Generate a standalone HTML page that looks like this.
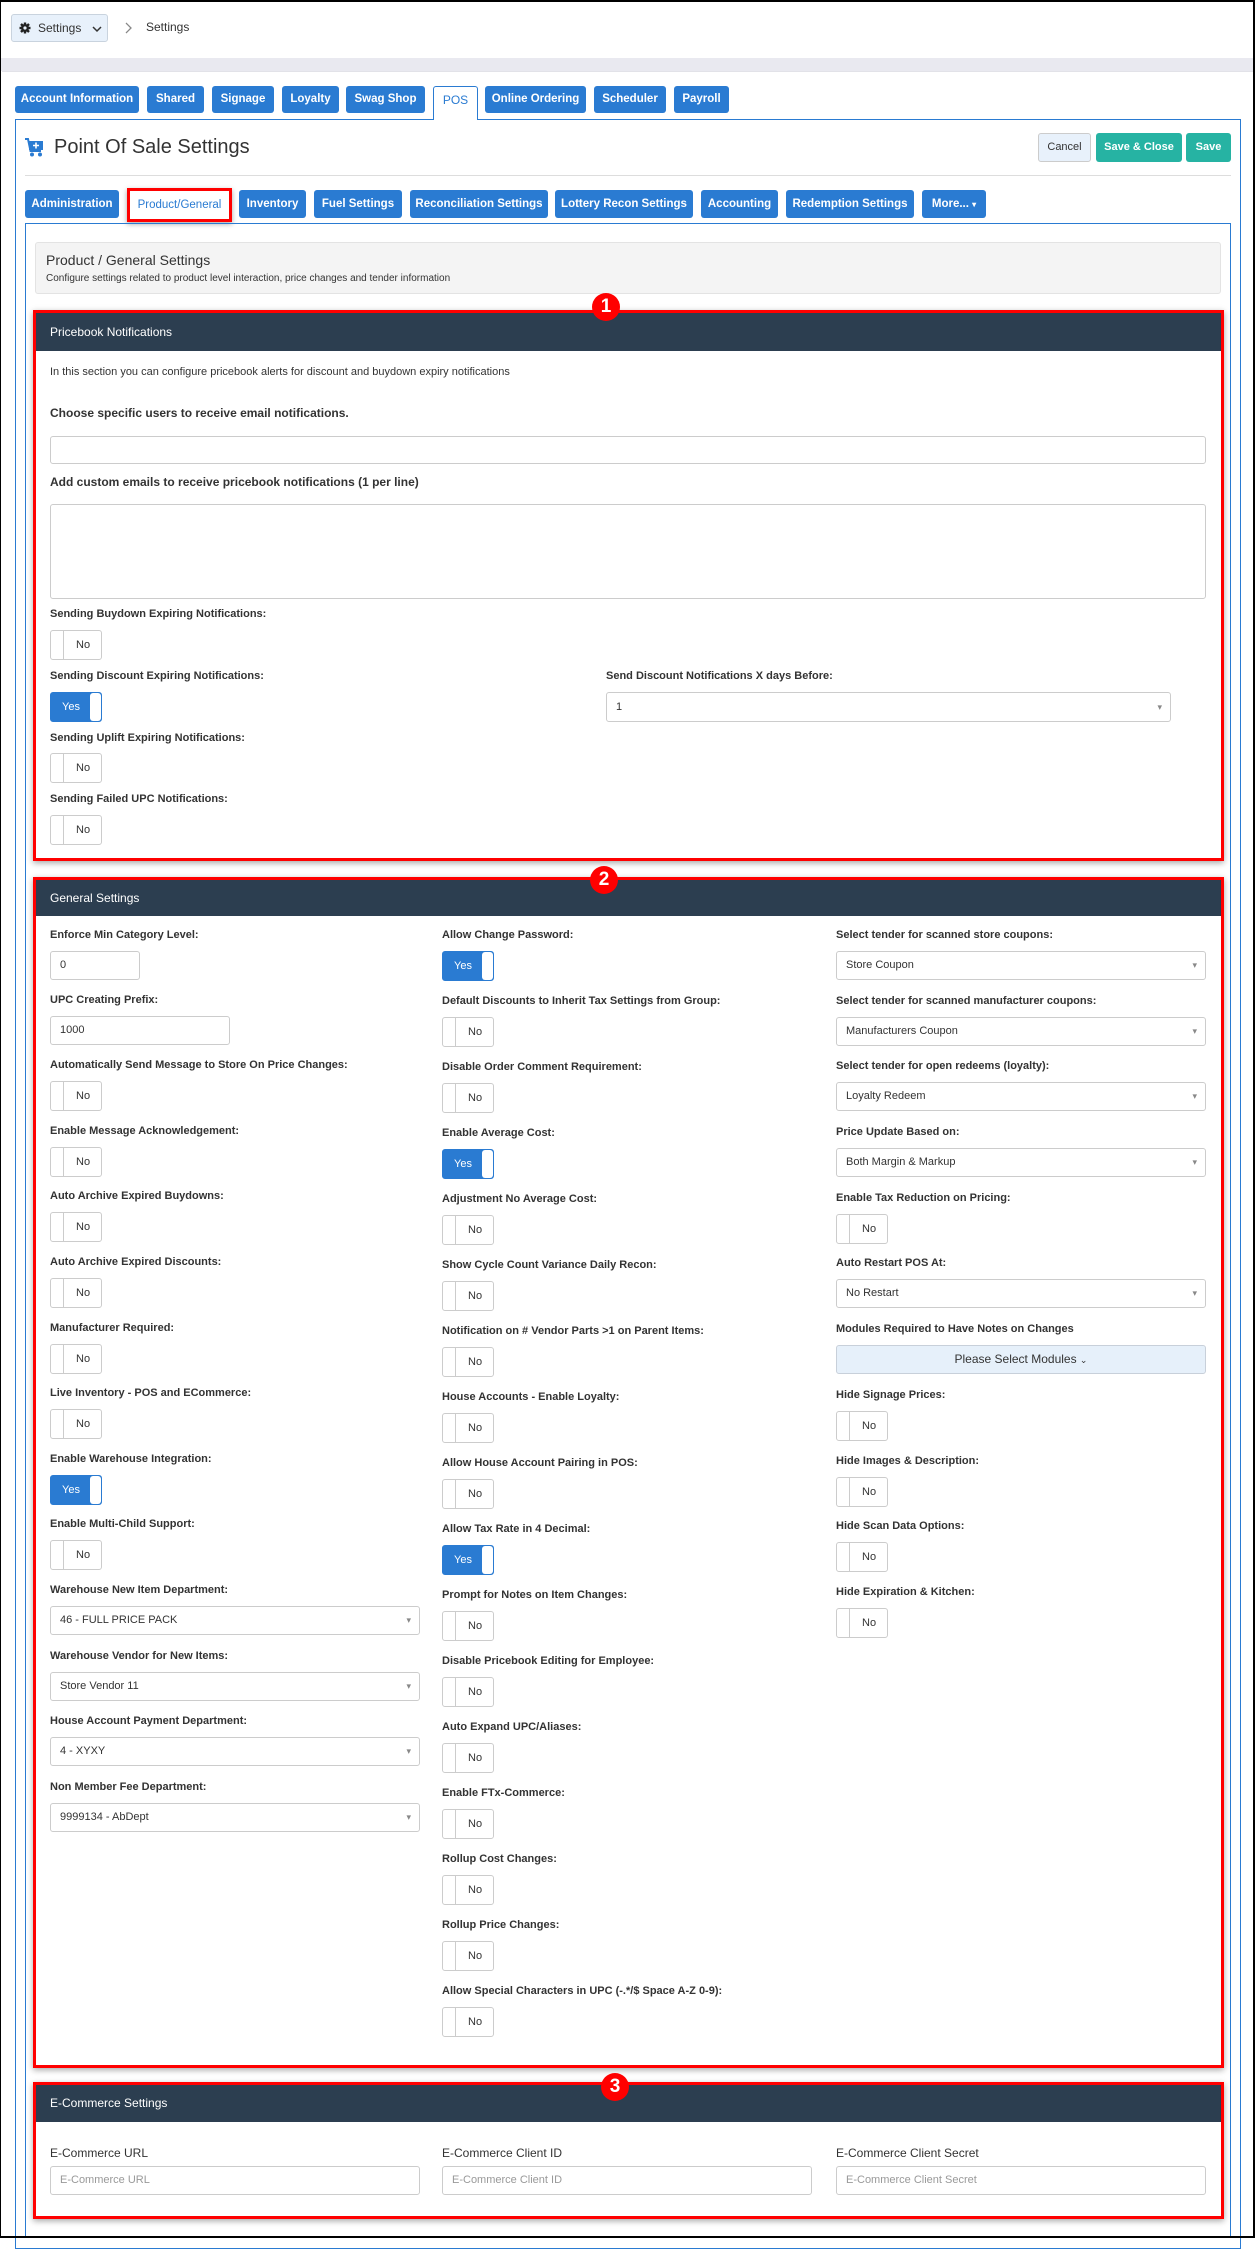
<!DOCTYPE html>
<html><head><meta charset="utf-8">
<style>
*{box-sizing:border-box;margin:0;padding:0}
body{width:1255px;height:2238px;position:relative;background:#fff;font-family:"Liberation Sans",Arial,sans-serif;color:#333;overflow:hidden}
.frame{position:absolute;left:0;top:0;width:1255px;height:2238px;border:2px solid #000;border-left-width:1px;pointer-events:none;z-index:50}
.tab{position:absolute;top:86px;height:27px;background:#2a7bd2;color:#fff;font-weight:bold;font-size:11.5px;line-height:27px;text-align:center;border-radius:3px;white-space:nowrap}
.st{position:absolute;top:190px;height:28px;background:#2a7bd2;color:#fff;font-weight:bold;font-size:11.5px;line-height:28px;text-align:center;border-radius:3px;white-space:nowrap}
.lbl{font-weight:bold;font-size:11px;color:#333;line-height:14px;white-space:nowrap}
.inp{height:29px;border:1px solid #ccc;border-radius:3px;background:#fff;font-size:11px;line-height:27px;padding-left:9px;color:#333}
.sel{position:relative}
.sel:after{content:"\25BE";position:absolute;right:8px;top:0;font-size:9px;color:#888}
.tg{position:relative;width:52px;height:30px;border:1px solid #ccc;border-radius:3px;background:#fff;font-size:11px}
.tg.no:before{content:"";position:absolute;left:0;top:0;width:12px;height:28px;border-right:1px solid #ccc;border-radius:3px 0 0 3px}
.tg.no span{position:absolute;left:25px;top:8px;color:#333}
.tg.yes{background:#2a7bd2;border-color:#2a7bd2}
.tg.yes:before{content:"";position:absolute;right:0;top:0;width:11px;height:28px;background:#fff;border-radius:3px}
.tg.yes span{position:absolute;left:11px;top:8px;color:#fff}
.red{position:absolute;border:3px solid #f00;box-shadow:0 2px 6px rgba(0,0,0,.35)}
.hdr{position:absolute;left:0;right:0;top:0;background:#2c3e50;color:#fff;font-size:12px;padding-left:14px}
.badge{position:absolute;width:28px;height:28px;border-radius:50%;background:#f00;color:#fff;font-weight:bold;font-size:19px;line-height:28px;text-align:center;z-index:5}
.col{position:absolute;display:flex;flex-direction:column}
.blk{position:relative;flex:none}
.blk .lbl{position:absolute;left:0;top:0}
.blk .c{position:absolute;left:0;top:23px}
.a{position:absolute !important}
</style></head><body>
<div class="frame"></div>

<div class="a" style="left:11px;top:14px;width:97px;height:28px;background:#e8f1fb;border:1px solid #c9d3de;border-radius:3px;font-size:12px;line-height:26px">
<svg class="a" style="left:7px;top:7px" width="12" height="12" viewBox="0 0 12 12"><g stroke="#222" stroke-width="2.4"><line x1="6" y1="0.5" x2="6" y2="11.5"/><line x1="0.5" y1="6" x2="11.5" y2="6"/><line x1="2" y1="2" x2="10" y2="10"/><line x1="10" y1="2" x2="2" y2="10"/></g><circle cx="6" cy="6" r="4" fill="#222"/><circle cx="6" cy="6" r="1.6" fill="#e8f1fb"/></svg>
<span class="a" style="left:26px;top:0">Settings</span>
<svg class="a" style="left:80px;top:11px" width="10" height="7" viewBox="0 0 10 7"><path d="M1 1L5 5L9 1" fill="none" stroke="#333" stroke-width="1.5"/></svg>
</div>
<svg class="a" style="left:125px;top:22px" width="7" height="12" viewBox="0 0 7 12"><path d="M1 1L6 6L1 11" fill="none" stroke="#888" stroke-width="1.3"/></svg>
<div class="a" style="left:146px;top:20px;font-size:12px">Settings</div>
<div class="a" style="left:1px;top:58px;width:1252px;height:13px;background:#e9e9f0"></div>
<div class="a" style="left:2px;top:71px;width:1251px;height:1px;background:#e2e2e8"></div>

<div class="tab" style="left:15px;width:124px">Account Information</div>
<div class="tab" style="left:147px;width:57px">Shared</div>
<div class="tab" style="left:212px;width:62px">Signage</div>
<div class="tab" style="left:282px;width:57px">Loyalty</div>
<div class="tab" style="left:346px;width:79px">Swag Shop</div>
<div class="tab" style="left:485px;width:101px">Online Ordering</div>
<div class="tab" style="left:594px;width:72px">Scheduler</div>
<div class="tab" style="left:674px;width:55px">Payroll</div>

<div class="a" style="left:15px;top:119px;width:1226px;height:2130px;border:1px solid #2a7bd2"></div>
<div class="a" style="left:433px;top:86px;width:45px;height:34px;background:#fff;border:1px solid #2a7bd2;border-bottom:none;border-radius:3px 3px 0 0;color:#2a7bd2;font-size:12px;line-height:27px;text-align:center">POS</div>

<svg class="a" style="left:25px;top:138px" width="19" height="19" viewBox="0 0 19 19"><rect x="4" y="3" width="14" height="9" fill="#2a7bd2"/><circle cx="7" cy="16.5" r="2" fill="#2a7bd2"/><circle cx="15" cy="16.5" r="2" fill="#2a7bd2"/><path d="M0 1H3L5.5 13H16" fill="none" stroke="#2a7bd2" stroke-width="2"/><path d="M11 4.5V10.5M8 7.5H14" stroke="#fff" stroke-width="1.6"/></svg>
<div class="a" style="left:54px;top:136px;font-size:20px;color:#333">Point Of Sale Settings</div>
<div class="a" style="left:1038px;top:133px;width:53px;height:29px;background:#e8f1fb;border:1px solid #ccc;border-radius:3px;font-size:11px;line-height:27px;text-align:center">Cancel</div>
<div class="a" style="left:1096px;top:133px;width:86px;height:29px;background:#26b3a3;border-radius:3px;color:#fff;font-weight:bold;font-size:11px;line-height:29px;text-align:center">Save &amp; Close</div>
<div class="a" style="left:1186px;top:133px;width:45px;height:29px;background:#26b3a3;border-radius:3px;color:#fff;font-weight:bold;font-size:11px;line-height:29px;text-align:center">Save</div>
<div class="a" style="left:25px;top:175px;width:1206px;height:1px;background:#ddd"></div>

<div class="st" style="left:25px;width:94px">Administration</div>
<div class="a" style="left:127px;top:188px;width:105px;height:34px;border:3px solid #f00;box-shadow:0 2px 5px rgba(0,0,0,.35);background:#fff;color:#2a7bd2;font-size:11.5px;line-height:28px;text-align:center">Product/General</div>
<div class="st" style="left:239px;width:67px">Inventory</div>
<div class="st" style="left:314px;width:88px">Fuel Settings</div>
<div class="st" style="left:410px;width:138px">Reconciliation Settings</div>
<div class="st" style="left:555px;width:138px">Lottery Recon Settings</div>
<div class="st" style="left:701px;width:77px">Accounting</div>
<div class="st" style="left:786px;width:128px">Redemption Settings</div>
<div class="st" style="left:922px;width:64px">More... <span style="font-size:8px">&#9662;</span></div>

<div class="a" style="left:25px;top:223px;width:1206px;height:2014px;border:1px solid #2a7bd2;border-bottom:none"></div>

<div class="a" style="left:35px;top:242px;width:1186px;height:52px;background:#f4f4f4;border:1px solid #e3e3e3;border-radius:3px">
<div class="a" style="left:10px;top:9px;font-size:14px;color:#333">Product / General Settings</div>
<div class="a" style="left:10px;top:30px;font-size:10px;color:#333">Configure settings related to product level interaction, price changes and tender information</div>
</div>

<div class="red" style="left:33px;top:310px;width:1191px;height:551px">
<div class="hdr" style="height:38px;line-height:38px">Pricebook Notifications</div>
</div>
<div class="badge" style="left:592px;top:293px">1</div>
<div class="a" style="left:50px;top:366px;font-size:11px">In this section you can configure pricebook alerts for discount and buydown expiry notifications</div>
<div class="a lbl" style="left:50px;top:406px;font-size:12px">Choose specific users to receive email notifications.</div>
<div class="a inp" style="left:50px;top:436px;width:1156px;height:28px"></div>
<div class="a lbl" style="left:50px;top:475px;font-size:12px">Add custom emails to receive pricebook notifications (1 per line)</div>
<div class="a inp" style="left:50px;top:504px;width:1156px;height:95px"></div>
<div class="a lbl" style="left:50px;top:607px">Sending Buydown Expiring Notifications:</div>
<div class="a tg no" style="left:50px;top:630px"><span>No</span></div>
<div class="a lbl" style="left:50px;top:669px">Sending Discount Expiring Notifications:</div>
<div class="a tg yes" style="left:50px;top:692px"><span>Yes</span></div>
<div class="a lbl" style="left:606px;top:669px">Send Discount Notifications X days Before:</div>
<div class="a inp sel" style="left:606px;top:692px;width:565px;height:30px;line-height:28px">1</div>
<div class="a lbl" style="left:50px;top:731px">Sending Uplift Expiring Notifications:</div>
<div class="a tg no" style="left:50px;top:753px"><span>No</span></div>
<div class="a lbl" style="left:50px;top:792px">Sending Failed UPC Notifications:</div>
<div class="a tg no" style="left:50px;top:815px"><span>No</span></div>

<div class="red" style="left:33px;top:877px;width:1191px;height:1191px">
<div class="hdr" style="height:36px;line-height:36px">General Settings</div>
</div>
<div class="badge" style="left:590px;top:866px">2</div>

<div class="col" style="left:50px;top:928px;width:370px">
<div class="blk" style="height:64.6px"><div class="lbl">Enforce Min Category Level:</div><div class="c inp" style="width:90px">0</div></div>
<div class="blk" style="height:65.6px"><div class="lbl">UPC Creating Prefix:</div><div class="c inp" style="width:180px">1000</div></div>
<div class="blk" style="height:65.6px"><div class="lbl">Automatically Send Message to Store On Price Changes:</div><div class="c tg no"><span>No</span></div></div>
<div class="blk" style="height:65.6px"><div class="lbl">Enable Message Acknowledgement:</div><div class="c tg no"><span>No</span></div></div>
<div class="blk" style="height:65.6px"><div class="lbl">Auto Archive Expired Buydowns:</div><div class="c tg no"><span>No</span></div></div>
<div class="blk" style="height:65.6px"><div class="lbl">Auto Archive Expired Discounts:</div><div class="c tg no"><span>No</span></div></div>
<div class="blk" style="height:65.6px"><div class="lbl">Manufacturer Required:</div><div class="c tg no"><span>No</span></div></div>
<div class="blk" style="height:65.6px"><div class="lbl">Live Inventory - POS and ECommerce:</div><div class="c tg no"><span>No</span></div></div>
<div class="blk" style="height:65.6px"><div class="lbl">Enable Warehouse Integration:</div><div class="c tg yes"><span>Yes</span></div></div>
<div class="blk" style="height:65.6px"><div class="lbl">Enable Multi-Child Support:</div><div class="c tg no"><span>No</span></div></div>
<div class="blk" style="height:65.6px"><div class="lbl">Warehouse New Item Department:</div><div class="c inp sel" style="width:370px">46 - FULL PRICE PACK</div></div>
<div class="blk" style="height:65.6px"><div class="lbl">Warehouse Vendor for New Items:</div><div class="c inp sel" style="width:370px">Store Vendor 11</div></div>
<div class="blk" style="height:65.6px"><div class="lbl">House Account Payment Department:</div><div class="c inp sel" style="width:370px">4 - XYXY</div></div>
<div class="blk" style="height:65.6px"><div class="lbl">Non Member Fee Department:</div><div class="c inp sel" style="width:370px">9999134 - AbDept</div></div>
</div>

<div class="col" style="left:442px;top:928px;width:370px">
<div class="blk" style="height:66px"><div class="lbl">Allow Change Password:</div><div class="c tg yes"><span>Yes</span></div></div>
<div class="blk" style="height:66px"><div class="lbl">Default Discounts to Inherit Tax Settings from Group:</div><div class="c tg no"><span>No</span></div></div>
<div class="blk" style="height:66px"><div class="lbl">Disable Order Comment Requirement:</div><div class="c tg no"><span>No</span></div></div>
<div class="blk" style="height:66px"><div class="lbl">Enable Average Cost:</div><div class="c tg yes"><span>Yes</span></div></div>
<div class="blk" style="height:66px"><div class="lbl">Adjustment No Average Cost:</div><div class="c tg no"><span>No</span></div></div>
<div class="blk" style="height:66px"><div class="lbl">Show Cycle Count Variance Daily Recon:</div><div class="c tg no"><span>No</span></div></div>
<div class="blk" style="height:66px"><div class="lbl">Notification on # Vendor Parts &gt;1 on Parent Items:</div><div class="c tg no"><span>No</span></div></div>
<div class="blk" style="height:66px"><div class="lbl">House Accounts - Enable Loyalty:</div><div class="c tg no"><span>No</span></div></div>
<div class="blk" style="height:66px"><div class="lbl">Allow House Account Pairing in POS:</div><div class="c tg no"><span>No</span></div></div>
<div class="blk" style="height:66px"><div class="lbl">Allow Tax Rate in 4 Decimal:</div><div class="c tg yes"><span>Yes</span></div></div>
<div class="blk" style="height:66px"><div class="lbl">Prompt for Notes on Item Changes:</div><div class="c tg no"><span>No</span></div></div>
<div class="blk" style="height:66px"><div class="lbl">Disable Pricebook Editing for Employee:</div><div class="c tg no"><span>No</span></div></div>
<div class="blk" style="height:66px"><div class="lbl">Auto Expand UPC/Aliases:</div><div class="c tg no"><span>No</span></div></div>
<div class="blk" style="height:66px"><div class="lbl">Enable FTx-Commerce:</div><div class="c tg no"><span>No</span></div></div>
<div class="blk" style="height:66px"><div class="lbl">Rollup Cost Changes:</div><div class="c tg no"><span>No</span></div></div>
<div class="blk" style="height:66px"><div class="lbl">Rollup Price Changes:</div><div class="c tg no"><span>No</span></div></div>
<div class="blk" style="height:66px"><div class="lbl">Allow Special Characters in UPC (-.*/$ Space A-Z 0-9):</div><div class="c tg no"><span>No</span></div></div>
</div>

<div class="col" style="left:836px;top:928px;width:370px">
<div class="blk" style="height:65.7px"><div class="lbl">Select tender for scanned store coupons:</div><div class="c inp sel" style="width:370px">Store Coupon</div></div>
<div class="blk" style="height:65.7px"><div class="lbl">Select tender for scanned manufacturer coupons:</div><div class="c inp sel" style="width:370px">Manufacturers Coupon</div></div>
<div class="blk" style="height:65.7px"><div class="lbl">Select tender for open redeems (loyalty):</div><div class="c inp sel" style="width:370px">Loyalty Redeem</div></div>
<div class="blk" style="height:65.7px"><div class="lbl">Price Update Based on:</div><div class="c inp sel" style="width:370px">Both Margin &amp; Markup</div></div>
<div class="blk" style="height:65.7px"><div class="lbl">Enable Tax Reduction on Pricing:</div><div class="c tg no"><span>No</span></div></div>
<div class="blk" style="height:65.7px"><div class="lbl">Auto Restart POS At:</div><div class="c inp sel" style="width:370px">No Restart</div></div>
<div class="blk" style="height:65.7px"><div class="lbl">Modules Required to Have Notes on Changes</div><div class="c" style="width:370px;height:29px;background:#e6f0fa;border:1px solid #c8d0da;border-radius:3px;font-size:12px;line-height:27px;text-align:center;color:#333">Please Select Modules <span style="font-size:9px">&#8964;</span></div></div>
<div class="blk" style="height:65.7px"><div class="lbl">Hide Signage Prices:</div><div class="c tg no"><span>No</span></div></div>
<div class="blk" style="height:65.7px"><div class="lbl">Hide Images &amp; Description:</div><div class="c tg no"><span>No</span></div></div>
<div class="blk" style="height:65.7px"><div class="lbl">Hide Scan Data Options:</div><div class="c tg no"><span>No</span></div></div>
<div class="blk" style="height:65.7px"><div class="lbl">Hide Expiration &amp; Kitchen:</div><div class="c tg no"><span>No</span></div></div>
</div>

<div class="red" style="left:33px;top:2082px;width:1191px;height:137px">
<div class="hdr" style="height:37px;line-height:37px">E-Commerce Settings</div>
</div>
<div class="badge" style="left:601px;top:2073px">3</div>
<div class="a" style="left:50px;top:2146px;font-size:12px;color:#333">E-Commerce URL</div>
<div class="a" style="left:442px;top:2146px;font-size:12px;color:#333">E-Commerce Client ID</div>
<div class="a" style="left:836px;top:2146px;font-size:12px;color:#333">E-Commerce Client Secret</div>
<div class="a inp" style="left:50px;top:2166px;width:370px;color:#999">E-Commerce URL</div>
<div class="a inp" style="left:442px;top:2166px;width:370px;color:#999">E-Commerce Client ID</div>
<div class="a inp" style="left:836px;top:2166px;width:370px;color:#999">E-Commerce Client Secret</div>
</body></html>
